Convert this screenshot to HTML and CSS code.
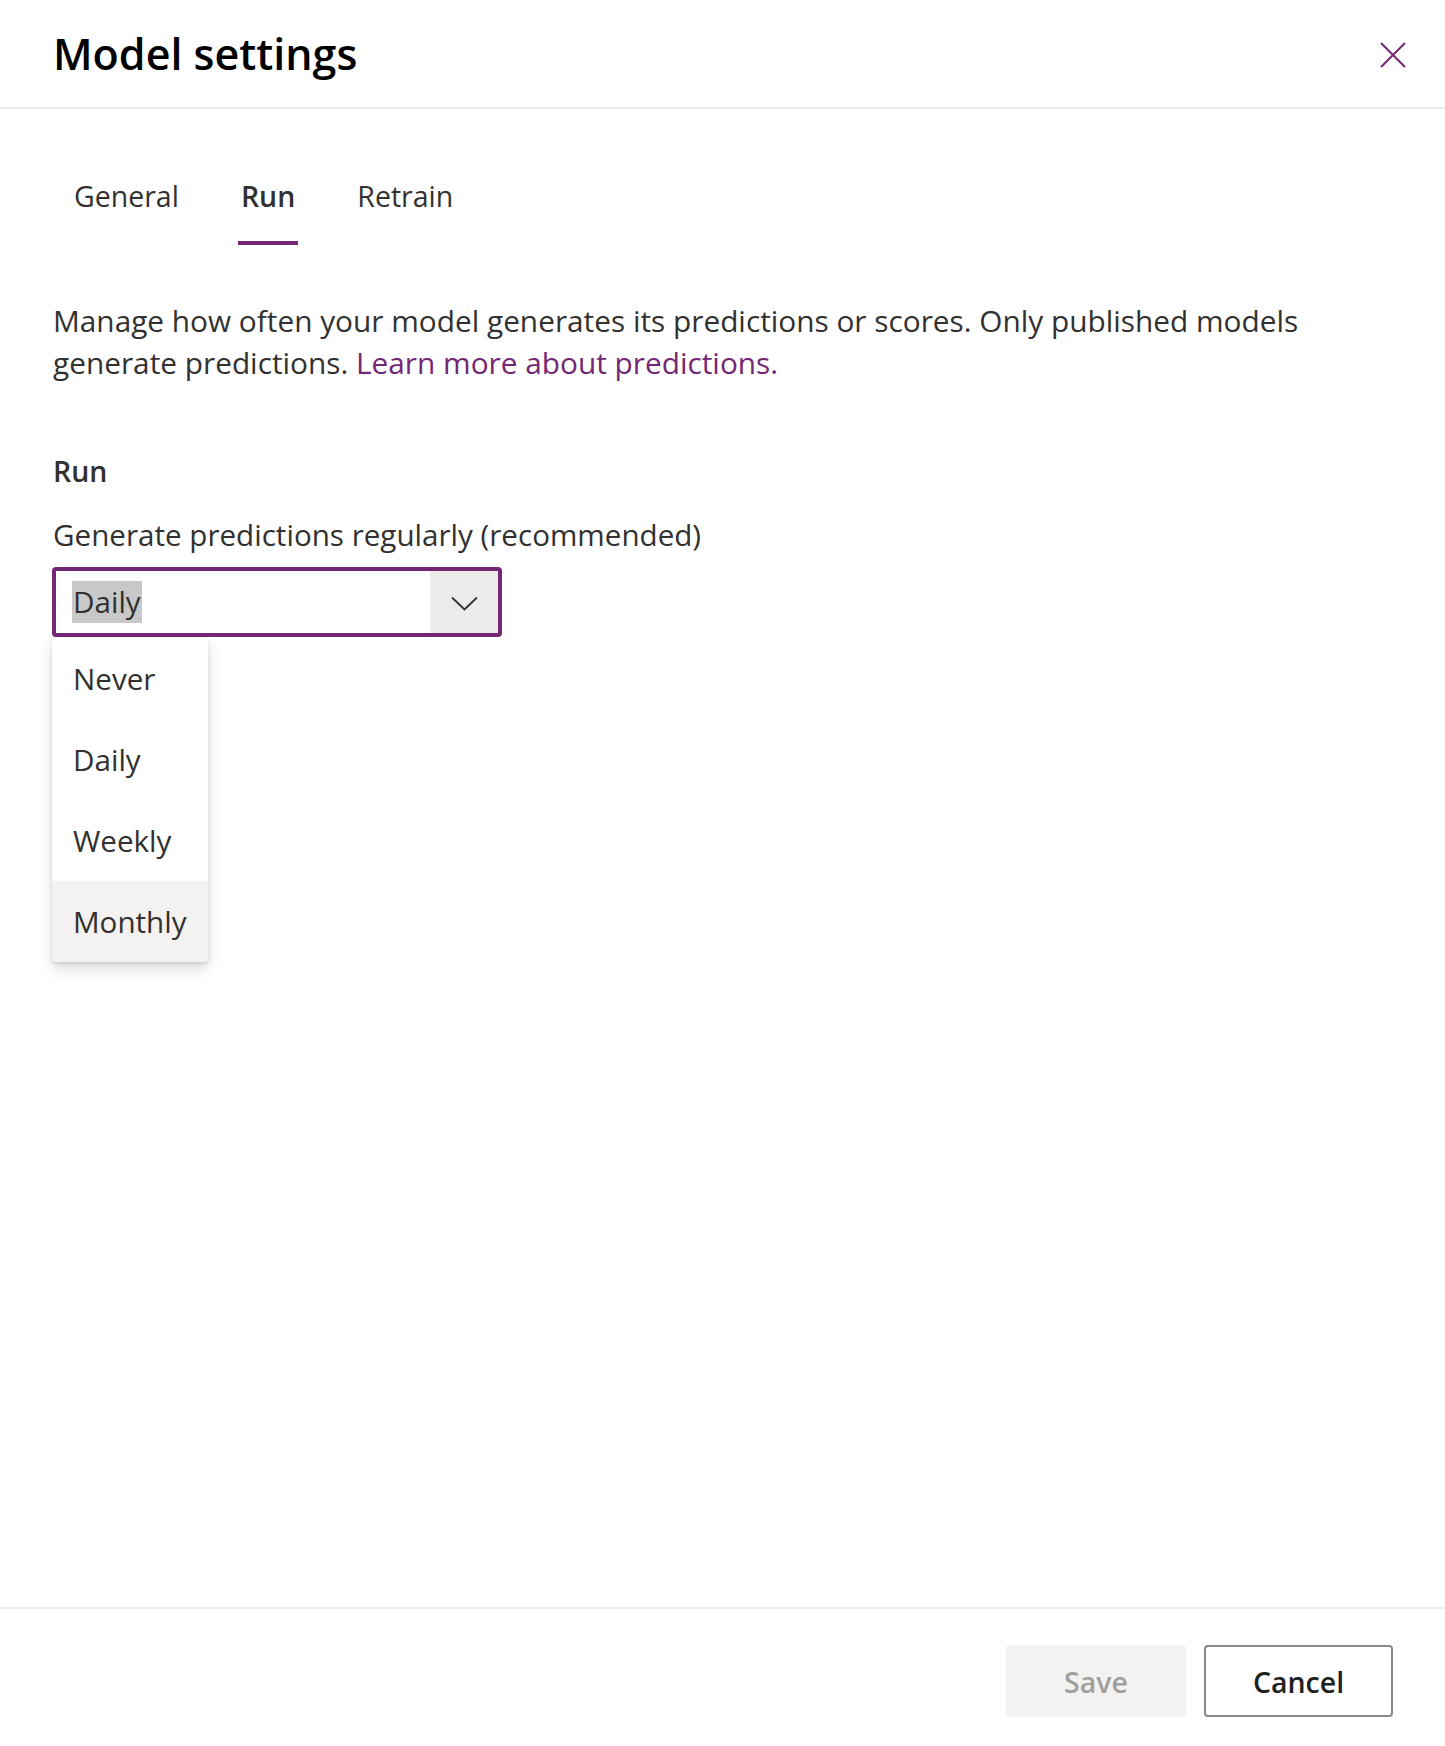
FILE: index.html
```html
<!DOCTYPE html>
<html lang="en">
<head>
<meta charset="utf-8">
<title>Model settings</title>
<link rel="stylesheet" href="styles.css">
</head>
<body>
<div class="panel">
  <header class="panel-header">
    <h1 class="panel-title">Model settings</h1>
    <button class="close-btn" aria-label="Close">
      <svg width="26" height="26" viewBox="0 0 26 26"><path d="M1 1 L25 25 M25 1 L1 25" stroke="#742774" stroke-width="2" fill="none"/></svg>
    </button>
  </header>

  <main class="panel-body">
    <nav class="tabs">
      <button class="tab">General</button>
      <button class="tab tab-active">Run</button>
      <button class="tab">Retrain</button>
    </nav>

    <p class="desc">Manage how often your model generates its predictions or scores. Only published models generate predictions. <a class="link" href="#">Learn more about predictions.</a></p>

    <h2 class="section-title">Run</h2>
    <label class="field-label">Generate predictions regularly (recommended)</label>

    <div class="dropdown-wrap">
      <div class="dropdown">
        <span class="dropdown-value"><span class="selected-text">Daily</span></span>
        <span class="dropdown-caret">
          <svg width="27" height="15" viewBox="0 0 27 15"><path d="M1 1.5 L13.5 13.5 L26 1.5" stroke="#323130" stroke-width="1.8" fill="none"/></svg>
        </span>
      </div>
      <ul class="menu">
        <li class="menu-item">Never</li>
        <li class="menu-item">Daily</li>
        <li class="menu-item">Weekly</li>
        <li class="menu-item menu-item-hover">Monthly</li>
      </ul>
    </div>
  </main>

  <footer class="panel-footer">
    <button class="btn btn-disabled">Save</button>
    <button class="btn btn-default">Cancel</button>
  </footer>
</div>
</body>
</html>
```

FILE: styles.css
```css
* { box-sizing: border-box; }
html, body { margin: 0; padding: 0; background: #fff; }
body {
  font-family: "Open Sans", "Noto Sans", "Liberation Sans", sans-serif;
  color: #323130;
}
.panel {
  display: flex;
  flex-direction: column;
  height: 100vh;
  width: 100%;
}
.panel-header {
  display: flex;
  align-items: center;
  justify-content: space-between;
  height: 109px;
  padding: 0 39px 0 53px;
  border-bottom: 2px solid #edebe9;
}
.panel-title {
  margin: 0;
  font-size: 43px;
  line-height: 56px;
  font-weight: 600;
  color: #000;
}
.close-btn {
  border: 0;
  background: none;
  padding: 0;
  width: 26px;
  height: 26px;
  display: flex;
  margin-top: 2px;
}
.panel-body {
  flex: 1;
  padding: 0 52px 0 53px;
}
.tabs {
  display: flex;
  gap: 20px;
  margin-top: 66px;
}
.tab {
  position: relative;
  border: 0;
  background: none;
  font-family: inherit;
  font-size: 28.5px;
  line-height: 42px;
  color: #323130;
  padding: 0 21px 28px;
}
.tab-active { font-weight: 600; }
.tab-active::after {
  content: "";
  position: absolute;
  left: 18px;
  right: 18px;
  bottom: 0;
  height: 4px;
  background: #742774;
}
.desc {
  margin: 55px 0 0;
  font-size: 29.8px;
  line-height: 42px;
}
.link { color: #742774; text-decoration: none; }
.section-title {
  margin: 66px 0 0;
  font-size: 28.5px;
  line-height: 42px;
  font-weight: 600;
}
.field-label {
  display: block;
  margin-top: 22px;
  font-size: 29.6px;
  line-height: 42px;
}
.dropdown-wrap {
  position: relative;
  width: 450px;
  margin-top: 11px;
  margin-left: -1px;
}
.dropdown {
  display: flex;
  height: 70px;
  border: 4px solid #742774;
  border-radius: 4px;
}
.dropdown-value {
  flex: 1;
  display: flex;
  align-items: center;
  padding-left: 16px;
}
.selected-text {
  background: #c8c8c8;
  font-size: 29.6px;
  line-height: 42px;
  padding: 0 1px;
}
.dropdown-caret {
  width: 68px;
  background: #edebe9;
  display: flex;
  align-items: center;
  justify-content: center;
  padding-top: 2px;
}
.menu {
  position: absolute;
  top: 71px;
  left: 0;
  width: 156px;
  margin: 0;
  padding: 0;
  list-style: none;
  background: #fff;
  border-radius: 4px;
  overflow: hidden;
  box-shadow: 0 6.4px 14.4px rgba(0,0,0,0.132), 0 1.2px 3.6px rgba(0,0,0,0.108);
}
.menu-item {
  height: 81px;
  line-height: 81px;
  padding-left: 21px;
  font-size: 29.6px;
  color: #323130;
}
.menu-item-hover { background: #f3f2f1; }
.panel-footer {
  display: flex;
  justify-content: flex-end;
  gap: 18px;
  border-top: 2px solid #edebe9;
  padding: 36px 52px 29px;
}
.btn {
  height: 72px;
  border-radius: 4px;
  font-family: inherit;
  font-size: 28.5px;
  font-weight: 600;
  padding: 2px 0 0;
}
.btn-disabled {
  width: 180px;
  background: #f3f2f1;
  border: 2px solid #f3f2f1;
  color: #a19f9d;
}
.btn-default {
  width: 189px;
  background: #fff;
  border: 2px solid #8a8886;
  color: #201f1e;
}
```
